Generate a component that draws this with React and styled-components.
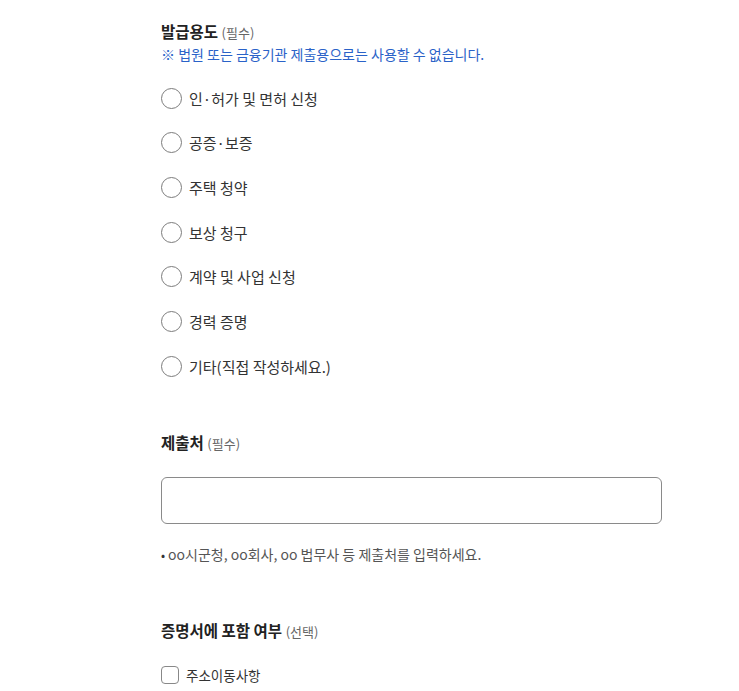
import React, { useState } from "react";
import styled, { createGlobalStyle } from "styled-components";

const PURPOSES = [
  "인·허가 및 면허 신청",
  "공증·보증",
  "주택 청약",
  "보상 청구",
  "계약 및 사업 신청",
  "경력 증명",
  "기타(직접 작성하세요.)",
];

export default function App() {
  const [purpose, setPurpose] = useState(null);
  const [includeAddr, setIncludeAddr] = useState(false);

  return (
    <>
      <GlobalStyle />
      <Page>
        <Form>
          <Title>
            발급용도 <Hint>(필수)</Hint>
          </Title>
          <Note>※ 법원 또는 금융기관 제출용으로는 사용할 수 없습니다.</Note>
          <RadioList>
            {PURPOSES.map((p) => (
              <RadioRow key={p} onClick={() => setPurpose(p)}>
                <Circle checked={purpose === p} />
                <RadioLabel>{p}</RadioLabel>
              </RadioRow>
            ))}
          </RadioList>

          <Title $gap={53}>
            제출처 <Hint>(필수)</Hint>
          </Title>
          <Input type="text" />
          <Helper>
            <Dot>•</Dot>oo시군청, oo회사, oo 법무사 등 제출처를 입력하세요.
          </Helper>

          <Title $gap={54}>
            증명서에 포함 여부 <Hint>(선택)</Hint>
          </Title>
          <CheckRow onClick={() => setIncludeAddr(!includeAddr)}>
            <Box checked={includeAddr} />
            <CheckLabel>주소이동사항</CheckLabel>
          </CheckRow>
        </Form>
      </Page>
    </>
  );
}

const GlobalStyle = createGlobalStyle`
  body {
    margin: 0;
    background: #fff;
    font-family: "Noto Sans CJK KR", "Noto Sans", sans-serif;
    color: #222;
  }
`;

const Page = styled.div`
  padding: 20px 0 0 161px;
`;

const Form = styled.div`
  width: 501px;
  display: flex;
  flex-direction: column;
`;

const Title = styled.div`
  font-size: 15.5px;
  line-height: 22px;
  font-weight: 700;
  color: #222;
  margin-top: ${(p) => p.$gap || 0}px;
`;

const Hint = styled.span`
  font-size: 13px;
  font-weight: 400;
  color: #666;
`;

const Note = styled.div`
  font-size: 14px;
  line-height: 20px;
  color: #2a62c8;
`;

const RadioList = styled.div`
  margin-top: 22px;
  display: flex;
  flex-direction: column;
  gap: 20.7px;
`;

const RadioRow = styled.label`
  display: flex;
  align-items: center;
  height: 24px;
  cursor: pointer;
`;

const Circle = styled.span`
  width: 21px;
  height: 21px;
  box-sizing: border-box;
  border-radius: 50%;
  border: 1.5px solid #7c7c7c;
  background: ${(p) => (p.checked ? "radial-gradient(#2a62c8 40%, #fff 45%)" : "#fff")};
  flex: none;
`;

const RadioLabel = styled.span`
  margin-left: 7px;
  font-size: 15px;
  color: #333;
`;

const Input = styled.input`
  margin-top: 22px;
  height: 47px;
  box-sizing: border-box;
  width: 100%;
  border: 1px solid #8a8a8a;
  border-radius: 6px;
  padding: 0 12px;
  font-size: 15px;
  font-family: inherit;
  outline: none;
`;

const Helper = styled.div`
  margin-top: 20px;
  font-size: 14px;
  line-height: 20px;
  color: #555;
`;

const Dot = styled.span`
  font-size: 12px;
  margin-right: 3px;
  color: #333;
`;

const CheckRow = styled.label`
  margin-top: 20px;
  display: flex;
  align-items: center;
  height: 24px;
  cursor: pointer;
`;

const Box = styled.span`
  width: 18px;
  height: 18px;
  box-sizing: border-box;
  border: 1.5px solid #888;
  border-radius: 4px;
  background: ${(p) => (p.checked ? "#2a62c8" : "#fff")};
  flex: none;
`;

const CheckLabel = styled.span`
  margin-left: 7px;
  font-size: 13.5px;
  color: #333;
`;
